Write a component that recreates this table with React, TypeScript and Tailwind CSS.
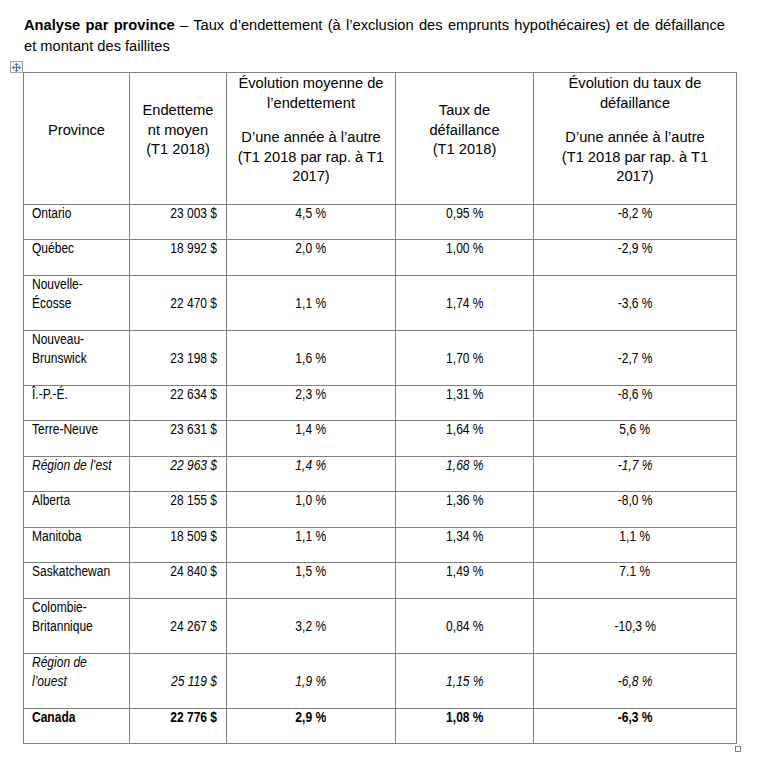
import React from 'react';

type Row = {
  name: React.ReactNode;
  debt: string;
  debtChange: string;
  rate: string;
  rateChange: string;
  style?: 'italic' | 'bold';
};

const rows: Row[] = [
  { name: 'Ontario', debt: '23 003 $', debtChange: '4,5 %', rate: '0,95 %', rateChange: '-8,2 %' },
  { name: 'Québec', debt: '18 992 $', debtChange: '2,0 %', rate: '1,00 %', rateChange: '-2,9 %' },
  { name: <>Nouvelle-<br />Écosse</>, debt: '22 470 $', debtChange: '1,1 %', rate: '1,74 %', rateChange: '-3,6 %' },
  { name: <>Nouveau-<br />Brunswick</>, debt: '23 198 $', debtChange: '1,6 %', rate: '1,70 %', rateChange: '-2,7 %' },
  { name: 'Î.-P.-É.', debt: '22 634 $', debtChange: '2,3 %', rate: '1,31 %', rateChange: '-8,6 %' },
  { name: 'Terre-Neuve', debt: '23 631 $', debtChange: '1,4 %', rate: '1,64 %', rateChange: '5,6 %' },
  { name: 'Région de l’est', debt: '22 963 $', debtChange: '1,4 %', rate: '1,68 %', rateChange: '-1,7 %', style: 'italic' },
  { name: 'Alberta', debt: '28 155 $', debtChange: '1,0 %', rate: '1,36 %', rateChange: '-8,0 %' },
  { name: 'Manitoba', debt: '18 509 $', debtChange: '1,1 %', rate: '1,34 %', rateChange: '1,1 %' },
  { name: 'Saskatchewan', debt: '24 840 $', debtChange: '1,5 %', rate: '1,49 %', rateChange: '7.1 %' },
  { name: <>Colombie-<br />Britannique</>, debt: '24 267 $', debtChange: '3,2 %', rate: '0,84 %', rateChange: '-10,3 %' },
  { name: <>Région de<br />l’ouest</>, debt: '25 119 $', debtChange: '1,9 %', rate: '1,15 %', rateChange: '-6,8 %', style: 'italic' },
  { name: 'Canada', debt: '22 776 $', debtChange: '2,9 %', rate: '1,08 %', rateChange: '-6,3 %', style: 'bold' },
];

const cell = 'border border-[#7f7f7f] p-0';

// no Arial Narrow installed: squeeze Liberation Sans horizontally instead
function Narrow({ children, origin }: { children: React.ReactNode; origin: 'left' | 'right' | 'center' }) {
  const o = origin === 'left' ? 'origin-left' : origin === 'right' ? 'origin-right' : 'origin-center';
  return <span className={`inline-block whitespace-nowrap scale-x-[0.82] -translate-y-[1.5px] ${o}`}>{children}</span>;
}

export default function App() {
  return (
    <div className="min-h-[759px] bg-white pl-[23px] pt-[15px] text-black font-['Liberation_Sans',Arial,sans-serif] text-[14.67px]">
      <div className="ml-[1px] w-[701px] leading-[21px]">
        <span className="block text-justify [text-align-last:justify]">
          <b>Analyse par province</b> – Taux d’endettement (à l’exclusion des emprunts hypothécaires) et de défaillance
        </span>
        <span className="block">et montant des faillites</span>
      </div>

      <div className="relative mt-[15px] w-[713px]">
        <MoveHandle />
        <table className="w-[713px] table-fixed border-collapse">
          <colgroup>
            <col className="w-[106px]" />
            <col className="w-[97px]" />
            <col className="w-[169px]" />
            <col className="w-[138px]" />
            <col className="w-[203px]" />
          </colgroup>
          <thead>
            <tr className="text-center align-middle leading-[19.5px]">
              <th className={`${cell} pt-[1px] pb-[2px] font-normal`}>
                <p className="mb-[15px]">Province</p>
              </th>
              <th className={`${cell} pt-[1px] pb-[2px] font-normal`}>
                <p className="mb-[15px]">Endetteme<br />nt moyen<br />(T1 2018)</p>
              </th>
              <th className={`${cell} pt-[1px] pb-[2px] font-normal`}>
                <p className="mb-[15px]">Évolution moyenne de<br />l’endettement</p>
                <p className="mb-[15px]">D’une année à l’autre<br />(T1 2018 par rap. à T1<br />2017)</p>
              </th>
              <th className={`${cell} pt-[1px] pb-[2px] font-normal`}>
                <p className="mb-[15px]">Taux de<br />défaillance<br />(T1 2018)</p>
              </th>
              <th className={`${cell} pt-[1px] pb-[2px] font-normal`}>
                <p className="mb-[15px]">Évolution du taux de<br />défaillance</p>
                <p className="mb-[15px]">D’une année à l’autre<br />(T1 2018 par rap. à T1<br />2017)</p>
              </th>
            </tr>
          </thead>
          <tbody className="leading-[19.5px]">
            {rows.map((r, i) => (
              <tr key={i} className={r.style === 'italic' ? 'italic' : r.style === 'bold' ? 'font-bold' : ''}>
                <td className={`${cell} pl-[8px] align-top`}>
                  <p className="mb-[15px]">
                    <Narrow origin="left">{r.name}</Narrow>
                  </p>
                </td>
                <td className={`${cell} pb-[15px] pr-[9px] text-right align-bottom`}>
                  <Narrow origin="right">{r.debt}</Narrow>
                </td>
                <td className={`${cell} pb-[15px] text-center align-bottom`}>
                  <Narrow origin="center">{r.debtChange}</Narrow>
                </td>
                <td className={`${cell} pb-[15px] text-center align-bottom`}>
                  <Narrow origin="center">{r.rate}</Narrow>
                </td>
                <td className={`${cell} pb-[15px] text-center align-bottom`}>
                  <Narrow origin="center">{r.rateChange}</Narrow>
                </td>
              </tr>
            ))}
          </tbody>
        </table>
        <span className="absolute right-[-5px] bottom-[-8px] h-[6px] w-[6px] border border-[#7f7f7f] bg-white" />
      </div>
    </div>
  );
}

function MoveHandle() {
  return (
    <span className="absolute left-[-13px] top-[-11px] flex h-[12px] w-[13px] items-center justify-center border border-[#a6a6a6] bg-[#f3f3f3]">
      <svg width="9" height="9" viewBox="0 0 9 9" fill="#3a6fd0">
        <rect x="4" y="1" width="1" height="7" />
        <rect x="1" y="4" width="7" height="1" />
        <path d="M4.5 0 L2.5 2 L6.5 2 Z" />
        <path d="M4.5 9 L2.5 7 L6.5 7 Z" />
        <path d="M0 4.5 L2 2.5 L2 6.5 Z" />
        <path d="M9 4.5 L7 2.5 L7 6.5 Z" />
      </svg>
    </span>
  );
}
